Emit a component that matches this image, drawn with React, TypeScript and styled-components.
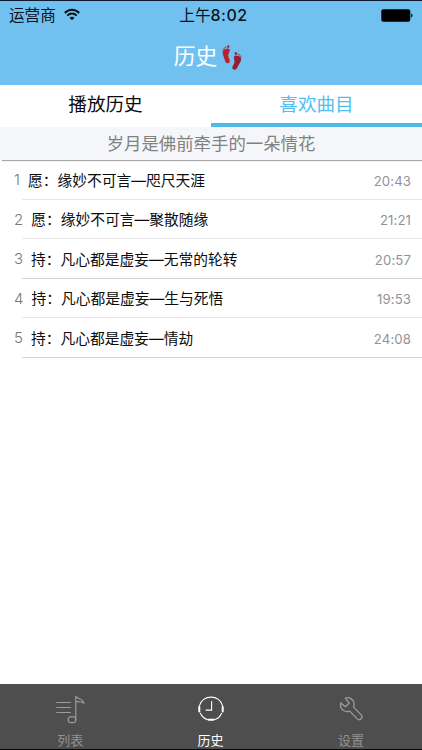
import React from 'react';
import styled, { createGlobalStyle } from 'styled-components';

const Global = createGlobalStyle`
  * { box-sizing: border-box; }
  body { margin: 0; background: #fff; font-family: Inter, "Noto Sans CJK SC", sans-serif; }
`;

const Screen = styled.div`
  width: 422px;
  height: 750px;
  display: flex;
  flex-direction: column;
  overflow: hidden;
  background: #fff;
  border-top: 1px solid #101a30;
  border-bottom: 1px solid #080808;
`;

const Header = styled.header`
  height: 84px;
  flex: none;
  background: #70c1f0;
`;

const StatusBar = styled.div`
  height: 28px;
  display: grid;
  grid-template-columns: 1fr auto 1fr;
  align-items: center;
  padding: 0 9px;
  font-size: 15.6px;
  line-height: 28px;
  color: #0b1218;
`;

const Carrier = styled.div`
  display: flex;
  align-items: center;
  gap: 8px;
  svg { margin-bottom: 2px; }
`;

const Clock = styled.div`
  font-weight: 400;
  font-size: 15.6px;
  padding-left: 5px;
  span { font-weight: 500; font-size: 16px; letter-spacing: 0.5px; }
`;

const BatterySlot = styled.div`
  display: flex;
  justify-content: flex-end;
  padding-bottom: 1px;
`;

const TitleBar = styled.h1`
  height: 56px;
  margin: 0;
  padding: 0 6px 2px 0;
  display: flex;
  align-items: center;
  justify-content: center;
  gap: 5px;
  font-size: 21.8px;
  font-weight: 400;
  line-height: 30px;
  color: #fff;
  svg { margin-top: 3px; }
`;

const Tabs = styled.nav`
  height: 42px;
  flex: none;
  display: grid;
  grid-template-columns: 1fr 1fr;
`;

const Tab = styled.button<{ $active?: boolean }>`
  appearance: none;
  border: 0;
  border-bottom: 4px solid ${p => (p.$active ? '#4fbaea' : '#fff')};
  background: #fff;
  padding: 0;
  font: 400 18.6px/38px Inter, "Noto Sans CJK SC", sans-serif;
  color: ${p => (p.$active ? '#52bdf0' : '#0c0c0c')};
`;

const NowPlaying = styled.div`
  height: 33px;
  flex: none;
  padding-top: 1px;
  background: #f5f6f9;
  text-align: center;
  font-size: 17.4px;
  line-height: 32px;
  color: #818182;
  box-shadow: 2px 1px 1px #aaa;
`;

const List = styled.ol`
  flex: 1;
  margin: 0;
  padding: 0;
  list-style: none;
`;

const Row = styled.li<{ $line: string }>`
  height: 39.5px;
  display: flex;
  align-items: center;
  padding: 2px 11px 0 14px;
  background: linear-gradient(${p => p.$line}, ${p => p.$line}) 22px 100% / 100% 1px no-repeat;
`;

const Index = styled.span`
  font-size: 15px;
  font-weight: 300;
  color: #777;
  margin: -2px 8px 0 0;
`;

const Song = styled.span`
  flex: 1;
  font-size: 14.75px;
  line-height: 20px;
  color: #0c0c0c;
  white-space: nowrap;
`;

const Duration = styled.span`
  font-size: 13.2px;
  color: #929294;
  letter-spacing: 0.1px;
`;

const TabBar = styled.footer`
  height: 65px;
  flex: none;
  display: grid;
  grid-template-columns: repeat(3, 140.4px);
  background: #4e4e4e;
`;

const NavItem = styled.div<{ $active?: boolean }>`
  display: flex;
  flex-direction: column;
  align-items: center;
  padding-top: 9px;
  font-size: 13px;
  line-height: 18px;
  color: ${p => (p.$active ? '#fff' : '#919191')};
  svg { margin-bottom: 4px; }
`;

const Wifi = () => (
  <svg width="16" height="13" viewBox="0 0 16 13" fill="none" stroke="#0b1218" strokeWidth="2">
    <path d="M.8 5C4.8.7 11.2.7 15.2 5M3.3 7.6c2.7-2.7 6.7-2.7 9.4 0" />
    <path d="M8 12.3 5.5 9.8c1.4-1.4 3.6-1.4 5 0Z" fill="#0b1218" stroke="none" />
  </svg>
);

const Battery = () => (
  <svg width="32" height="13" viewBox="0 0 32 13">
    <rect x="0.3" y="0.3" width="29" height="12.4" rx="2" fill="#000" />
    <path d="M30.2 4.5c1.7.3 1.7 3.7 0 4Z" fill="#000" />
  </svg>
);

const Footprints = () => (
  <svg width="20" height="26" viewBox="0 0 20 26">
    <g fill="#bb202e">
      <path d="M.8 5.8C1.5 4 6.3 2.7 7.6 4.2c1 1.6-1.4 3.8-1.3 6.3.1 2.8 2.1 4.4 1.2 6.5-.8 1.9-3.5 1.5-4.2-.5C2.5 13.7 0 8.5.8 5.8Z" />
      <ellipse cx="6.3" cy="1.7" rx="1.1" ry="1.4" />
      <circle cx="3.9" cy="2.3" r=".7" />
      <circle cx="2.3" cy="3.1" r=".6" />
      <circle cx="1" cy="4.1" r=".6" />
    </g>
    <g fill="#981d30">
      <path d="M12.4 11c1.4-1.4 6 .2 6.7 2 .8 2.8-2.5 6.5-4 10-.9 1.9-3.5 2.5-4.5.8-1.1-2.1 1.6-4 1.9-6.8.2-2.3-1.4-4.5-.1-6Z" />
      <ellipse cx="13.8" cy="8.5" rx="1.1" ry="1.4" />
      <circle cx="16.1" cy="9.2" r=".7" />
      <circle cx="17.7" cy="10.1" r=".6" />
      <circle cx="18.9" cy="11.2" r=".6" />
    </g>
  </svg>
);

const MusicListIcon = () => (
  <svg width="30" height="34" viewBox="0 0 30 34" fill="none" stroke="#9b9b9b" strokeWidth="1.2">
    <path d="M1.3 9.5h14.5M1.3 14.5h14.5M1.3 19.5h14.5" />
    <path d="M20.8 27V3.2c1.2 3 7.6 2.3 8 6.8-2.7-1.8-5.4-1.6-8-1.3" />
    <ellipse cx="17" cy="26.7" rx="3.9" ry="3" />
  </svg>
);

const ClockIcon = () => (
  <svg width="30" height="34" viewBox="0 0 30 34" fill="none" stroke="#fff" strokeWidth="1.1" strokeLinecap="round">
    <path d="M3.4 13C5.8 1.2 24.2 1.2 26.6 13M4.4 20.2c1.5 3.4 4.2 5.7 7.8 6.5M25.6 20.2c-1.4 3.4-4 5.6-7.4 6.5M15.6 8.5v8.6h-5.5" />
    <path d="M3.3 14v4.5M26.7 14v4.5M12.6 26.8h4.8" strokeWidth="2" />
  </svg>
);

const WrenchIcon = () => (
  <svg width="30" height="34" viewBox="0 0 30 34" fill="none" stroke="#9b9b9b" strokeWidth="1.3" strokeLinejoin="round">
    <path d="M9.3 5.2c4.2-1.7 8.8 1.5 8.8 5.9 0 1.4-.3 2.2-.6 3l7.7 7.8c2.4 2.5-1.4 6.4-3.9 4l-7.6-7.8c-4.8 1.9-9.5-1.8-9.2-6.7 0-.5.2-1.1.4-1.5l4.6 3.9 3.7-3.8Z" />
  </svg>
);

const songs = [
  ['愿：缘妙不可言—咫尺天涯', '20:43'],
  ['愿：缘妙不可言—聚散随缘', '21:21'],
  ['持：凡心都是虚妄—无常的轮转', '20:57'],
  ['持：凡心都是虚妄—生与死悟', '19:53'],
  ['持：凡心都是虚妄—情劫', '24:08'],
];

export default function App() {
  return (
    <>
      <Global />
      <Screen>
        <Header>
          <StatusBar>
            <Carrier>运营商<Wifi /></Carrier>
            <Clock>上午<span>8:02</span></Clock>
            <BatterySlot><Battery /></BatterySlot>
          </StatusBar>
          <TitleBar>历史<Footprints /></TitleBar>
        </Header>
        <Tabs>
          <Tab>播放历史</Tab>
          <Tab $active>喜欢曲目</Tab>
        </Tabs>
        <NowPlaying>岁月是佛前牵手的一朵情花</NowPlaying>
        <List>
          {songs.map(([title, time], i) => (
            <Row key={title} $line={i === 2 || i === 4 ? '#d4d4d6' : '#e6e6e8'}>
              <Index>{i + 1}</Index>
              <Song>{title}</Song>
              <Duration>{time}</Duration>
            </Row>
          ))}
        </List>
        <TabBar>
          <NavItem><MusicListIcon />列表</NavItem>
          <NavItem $active><ClockIcon />历史</NavItem>
          <NavItem><WrenchIcon />设置</NavItem>
        </TabBar>
      </Screen>
    </>
  );
}
